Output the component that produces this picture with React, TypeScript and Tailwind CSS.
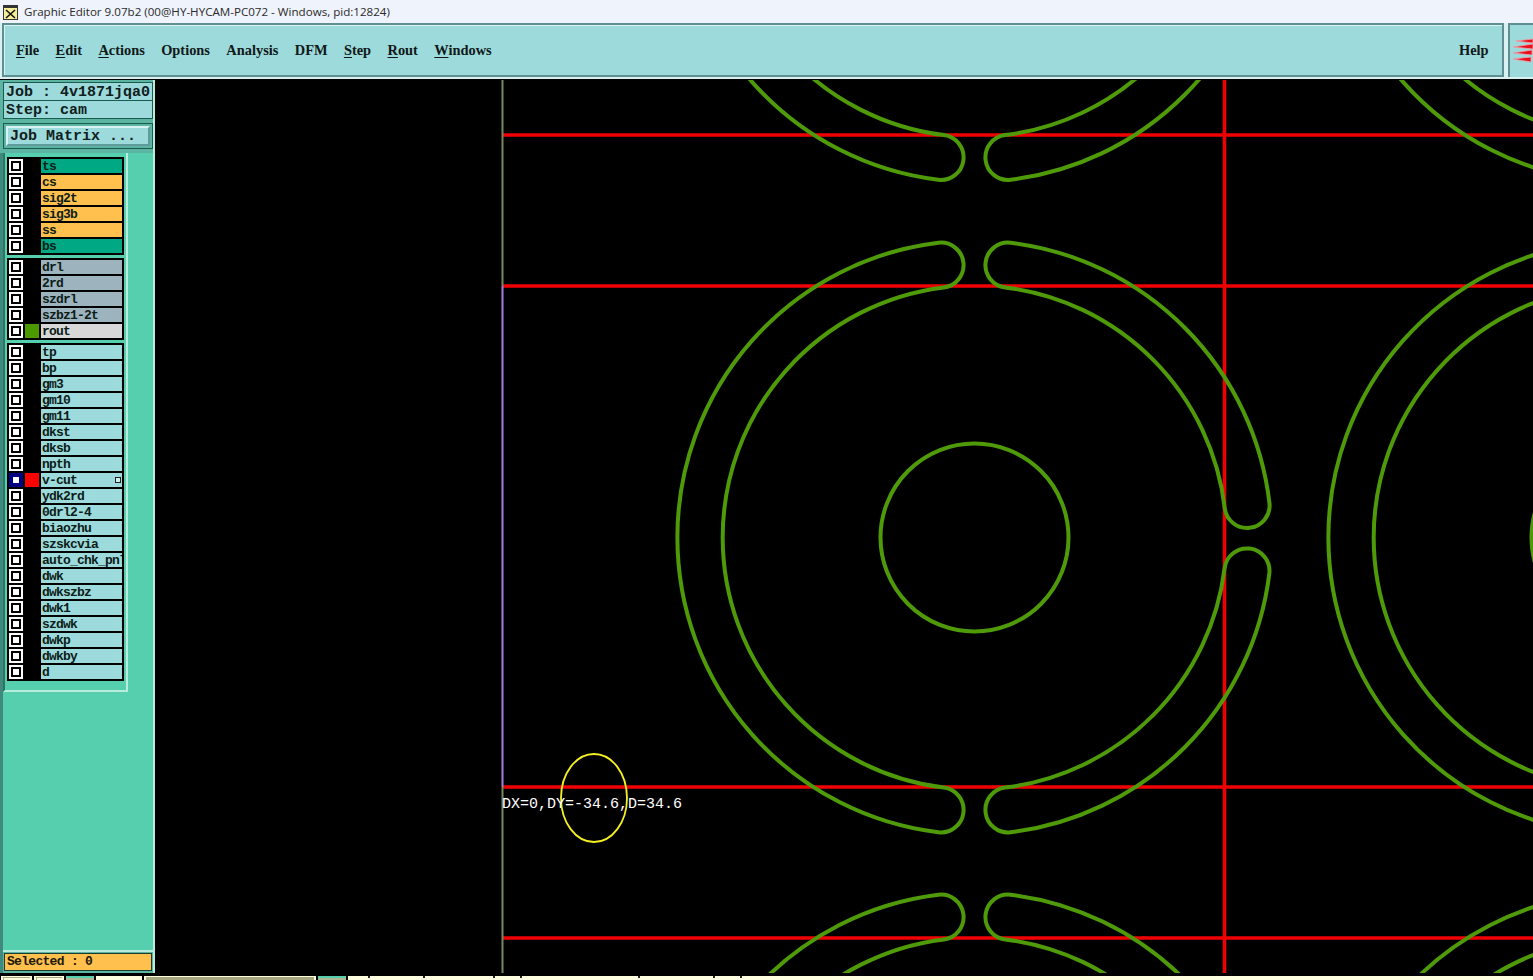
import React from "react";

type Layer = { name: string; color: string; swatch?: string; active?: boolean };

const mono = "font-['Liberation_Mono',monospace]";

const board: Layer[] = [
  { name: "ts", color: "bg-[#00a884]" },
  { name: "cs", color: "bg-[#ffc04d]" },
  { name: "sig2t", color: "bg-[#ffc04d]" },
  { name: "sig3b", color: "bg-[#ffc04d]" },
  { name: "ss", color: "bg-[#ffc04d]" },
  { name: "bs", color: "bg-[#00a884]" },
];

const drill: Layer[] = [
  { name: "drl", color: "bg-[#9db3bd]" },
  { name: "2rd", color: "bg-[#9db3bd]" },
  { name: "szdrl", color: "bg-[#9db3bd]" },
  { name: "szbz1-2t", color: "bg-[#9db3bd]" },
  { name: "rout", color: "bg-[#d8d8d8]", swatch: "bg-[#4a9a00]" },
];

const misc: Layer[] = [
  "tp", "bp", "gm3", "gm10", "gm11", "dkst", "dksb", "npth", "v-cut", "ydk2rd", "0drl2-4",
  "biaozhu", "szskcvia", "auto_chk_pnl", "dwk", "dwkszbz", "dwk1", "szdwk", "dwkp", "dwkby", "d",
].map((name) =>
  name === "v-cut"
    ? { name, color: "bg-[#9cdadb]", swatch: "bg-[#ff0000]", active: true }
    : { name, color: "bg-[#9cdadb]" }
);

const menus = [
  { label: "File", key: true },
  { label: "Edit", key: true },
  { label: "Actions", key: true },
  { label: "Options", key: false },
  { label: "Analysis", key: false },
  { label: "DFM", key: false },
  { label: "Step", key: true },
  { label: "Rout", key: true },
  { label: "Windows", key: true },
];

// tops of the status text that the window edge cuts off
const statusTicks = [20, 75, 145, 172, 290, 365, 392];

function LayerRow({ layer }: { layer: Layer }) {
  return (
    <div className="flex h-[14px] items-stretch">
      <div
        className={`ml-[2px] flex w-[14px] items-center justify-center ${layer.active ? "bg-[#000080]" : "bg-white"}`}
      >
        <div className={`flex h-[10px] w-[10px] items-center justify-center ${layer.active ? "bg-[#000080]" : "bg-black"}`}>
          <div className="h-[6px] w-[6px] bg-white" />
        </div>
      </div>
      <div className={`ml-[2px] w-[14px] ${layer.swatch ?? ""}`} />
      <div
        className={`relative ml-[2px] flex w-[81px] items-center overflow-hidden whitespace-nowrap pl-[1px] pt-[1px] text-[13px] font-bold leading-none tracking-[-0.8px] text-[#0c1c18] ${mono} ${layer.color}`}
      >
        {layer.name}
        {layer.active && (
          <span className="absolute right-[1px] top-[4px] h-[6px] w-[6px] border border-[#222] bg-[#cfeeee]" />
        )}
      </div>
    </div>
  );
}

function LayerGroup({ layers }: { layers: Layer[] }) {
  return (
    <div className="flex w-[117px] flex-col gap-[2px] bg-black py-[2px]">
      {layers.map((layer) => (
        <LayerRow key={layer.name} layer={layer} />
      ))}
    </div>
  );
}

function polar(r: number, deg: number) {
  const a = (deg * Math.PI) / 180;
  return `${(r * Math.sin(a)).toFixed(1)} ${(-r * Math.cos(a)).toFixed(1)}`;
}

// slot between two angles, clockwise from the top
function slotPath(from: number, to: number) {
  const outer = 297;
  const inner = 252;
  const cap = 22.5;
  const large = to - from > 180 ? 1 : 0;
  return [
    `M${polar(outer, from)}`,
    `A${outer} ${outer} 0 ${large} 1 ${polar(outer, to)}`,
    `A${cap} ${cap} 0 0 1 ${polar(inner, to)}`,
    `A${inner} ${inner} 0 ${large} 0 ${polar(inner, from)}`,
    `A${cap} ${cap} 0 0 1 ${polar(outer, from)}Z`,
  ].join(" ");
}

function Unit({ x, y }: { x: number; y: number }) {
  return (
    <g transform={`translate(${x} ${y})`} fill="none" stroke="#4f9a08" strokeWidth="4">
      <circle r="94" />
      <path d={slotPath(7, 83.4)} />
      <path d={slotPath(97, 173)} />
      <path d={slotPath(187, 353)} />
    </g>
  );
}

function Canvas() {
  const ys = [135, 286, 787, 938];
  return (
    <div className="relative h-[893px] flex-1 overflow-hidden bg-black">
      <svg className="block" width="1378" height="893" viewBox="155 80 1378 893">
        {ys.map((y) => (
          <line key={y} x1="503" x2="1533" y1={y} y2={y} stroke="#f00000" strokeWidth="3.6" />
        ))}
        <line x1="1224.5" x2="1224.5" y1="80" y2="973" stroke="#f00000" strokeWidth="3.6" />
        <line x1="502.5" x2="502.5" y1="80" y2="286" stroke="#74895f" strokeWidth="2" />
        <line x1="502.5" x2="502.5" y1="286" y2="787" stroke="#a880dc" strokeWidth="2" />
        <line x1="502.5" x2="502.5" y1="787" y2="973" stroke="#74895f" strokeWidth="2" />
        {[-115, 537.5, 1189.5].map((y) => (
          <React.Fragment key={y}>
            <Unit x={974.5} y={y} />
            <Unit x={1625.5} y={y} />
          </React.Fragment>
        ))}
        <ellipse cx="594" cy="798" rx="33" ry="44" fill="none" stroke="#f5f020" strokeWidth="1.8" />
      </svg>
      <div className={`absolute left-[347px] top-[717px] text-[15px] leading-[16px] text-white ${mono}`}>
        DX=0,DY=-34.6,D=34.6
      </div>
    </div>
  );
}

function Sidebar() {
  return (
    <div className="flex h-[893px] w-[155px] flex-col border-r-2 border-r-[#b8ecdc] bg-[#56cfae]">
      <div className="flex h-[73px] flex-col bg-[#5cb5a3] pl-[3px] pt-[2px]">
        <div className={`h-[19px] border border-[#1c5c4e] bg-[#9cdadb] pl-[2px] text-[15px] font-bold leading-[19px] text-[#10201c] ${mono}`}>
          Job : 4v1871jqa0
        </div>
        <div className={`h-[18px] border border-t-0 border-[#1c5c4e] bg-[#9cdadb] pl-[2px] pt-[2px] text-[15px] font-bold leading-[16px] text-[#10201c] ${mono}`}>
          Step: cam
        </div>
        <div className="mt-[4px] h-[26px] border border-[#1c5c4e] p-[2px]">
          <div className={`h-[20px] border-2 border-b-[#5f9a9c] border-l-[#d7f3f3] border-r-[#5f9a9c] border-t-[#d7f3f3] bg-[#9cdadb] pl-[2px] text-[15px] font-bold leading-[17px] text-[#10201c] ${mono}`}>
            Job Matrix ...
          </div>
        </div>
      </div>
      <div className="flex min-h-0 flex-1 flex-col border-l-[3px] border-l-[#3f8a7c]">
        <div className="w-[125px] flex-none border-b-2 border-l-2 border-r-2 border-b-[#b8ecdc] border-l-[#2f7566] border-r-[#b8ecdc] bg-[#56cfae] pb-[9px] pl-[2px] pt-[4px]">
          <div className="flex flex-col gap-[3px]">
            <LayerGroup layers={board} />
            <LayerGroup layers={drill} />
            <LayerGroup layers={misc} />
          </div>
        </div>
        <div className="flex-1" />
        <div className="mb-0 h-[23px] border-t-2 border-t-[#b8ecdc] bg-[#5cb5a3] p-[1px]">
          <div className={`h-[18px] border border-[#1c3c30] bg-[#ffc04d] pl-[2px] text-[13px] font-bold leading-[16px] tracking-[-0.7px] text-[#201808] ${mono}`}>
            Selected : 0
          </div>
        </div>
      </div>
    </div>
  );
}

export default function App() {
  return (
    <div className="flex h-[980px] w-[1533px] flex-col overflow-hidden bg-black">
      <div className="flex h-[23px] flex-none items-center bg-[#eff3fc] pl-[3px] pt-[1px] font-['Open_Sans',sans-serif] text-[11.6px] text-[#2a2a2a]">
        <svg width="15" height="15" viewBox="0 0 15 15" className="mr-[6px]">
          <rect x="0.5" y="0.5" width="14" height="14" fill="#f6ef9a" stroke="#333" />
          <rect x="0" y="0" width="15" height="3" fill="#333" />
          <path d="M3 5 L12 13 M12 5 L3 13" stroke="#111" strokeWidth="1.6" />
        </svg>
        Graphic Editor 9.07b2 (00@HY-HYCAM-PC072 - Windows, pid:12824)
      </div>
      <div className="flex h-[56px] flex-none bg-[#d9f1f1] pl-[2px]">
        <div className="flex h-[54px] flex-1 items-center justify-between border-2 border-[#5f8f90] bg-[#9cdadb] pl-[12px] pr-[11px] pt-[2px] font-['Liberation_Serif',serif] text-[14.4px] font-bold text-[#101818] shadow-[inset_1px_1px_0_#d7f3f3]">
          <div className="flex gap-[16.4px]">
            {menus.map((m) => (
              <span key={m.label}>
                {m.key ? <span className="underline underline-offset-2">{m.label[0]}</span> : m.label[0]}
                {m.label.slice(1)}
              </span>
            ))}
          </div>
          <span className="w-[32px]">Help</span>
        </div>
        <div className="ml-[4px] flex h-[54px] w-[25px] flex-none items-center overflow-hidden border-l-2 border-t-2 border-[#5f8f90] bg-[#9cdadb]">
          <svg width="23" height="36" viewBox="0 0 23 36">
            <path
              d="M6 8 L23 6 L23 10 Z M3 14 L23 11 L23 16 Z M3 20 L22 17 L22 22 Z M3 26 L21 24 L21 29 Z"
              fill="#e8101c"
              stroke="#f4a0a8"
              strokeWidth="0.8"
            />
          </svg>
        </div>
      </div>
      <div className="flex flex-none pt-[1px]">
        <Sidebar />
        <Canvas />
      </div>
      <div className="mt-[3px] flex h-[4px] flex-none gap-[2px] overflow-hidden pl-[1px]">
        <div className="w-[31px] bg-[#fdfde0] px-[2px] pt-[1px]">
          <div className="h-full border-l border-t border-[#a8a880]" />
        </div>
        <div className="w-[30px] bg-[#fdfde0] px-[2px] pt-[1px]">
          <div className="h-full border-l border-t border-[#a8a880]" />
        </div>
        <div className="w-[28px] border-t-2 border-[#56cfae] bg-[#b0b890]" />
        <div className="w-[46px] bg-[#fdfde0]" />
        <div className="w-[172px] bg-[#fdfde0] px-[2px] pt-[1px]">
          <div className="h-full bg-[#a8a880]" />
        </div>
        <div className="w-[28px] border-t-2 border-[#56cfae] bg-[#b0b890]" />
        <div className="flex-1 bg-[#fdfde0]">
          <svg width="400" height="4" viewBox="0 0 400 4" className="block">
            {statusTicks.map((x) => (
              <rect key={x} x={x} y="0" width="2" height="2" fill="#222" />
            ))}
          </svg>
        </div>
      </div>
    </div>
  );
}
